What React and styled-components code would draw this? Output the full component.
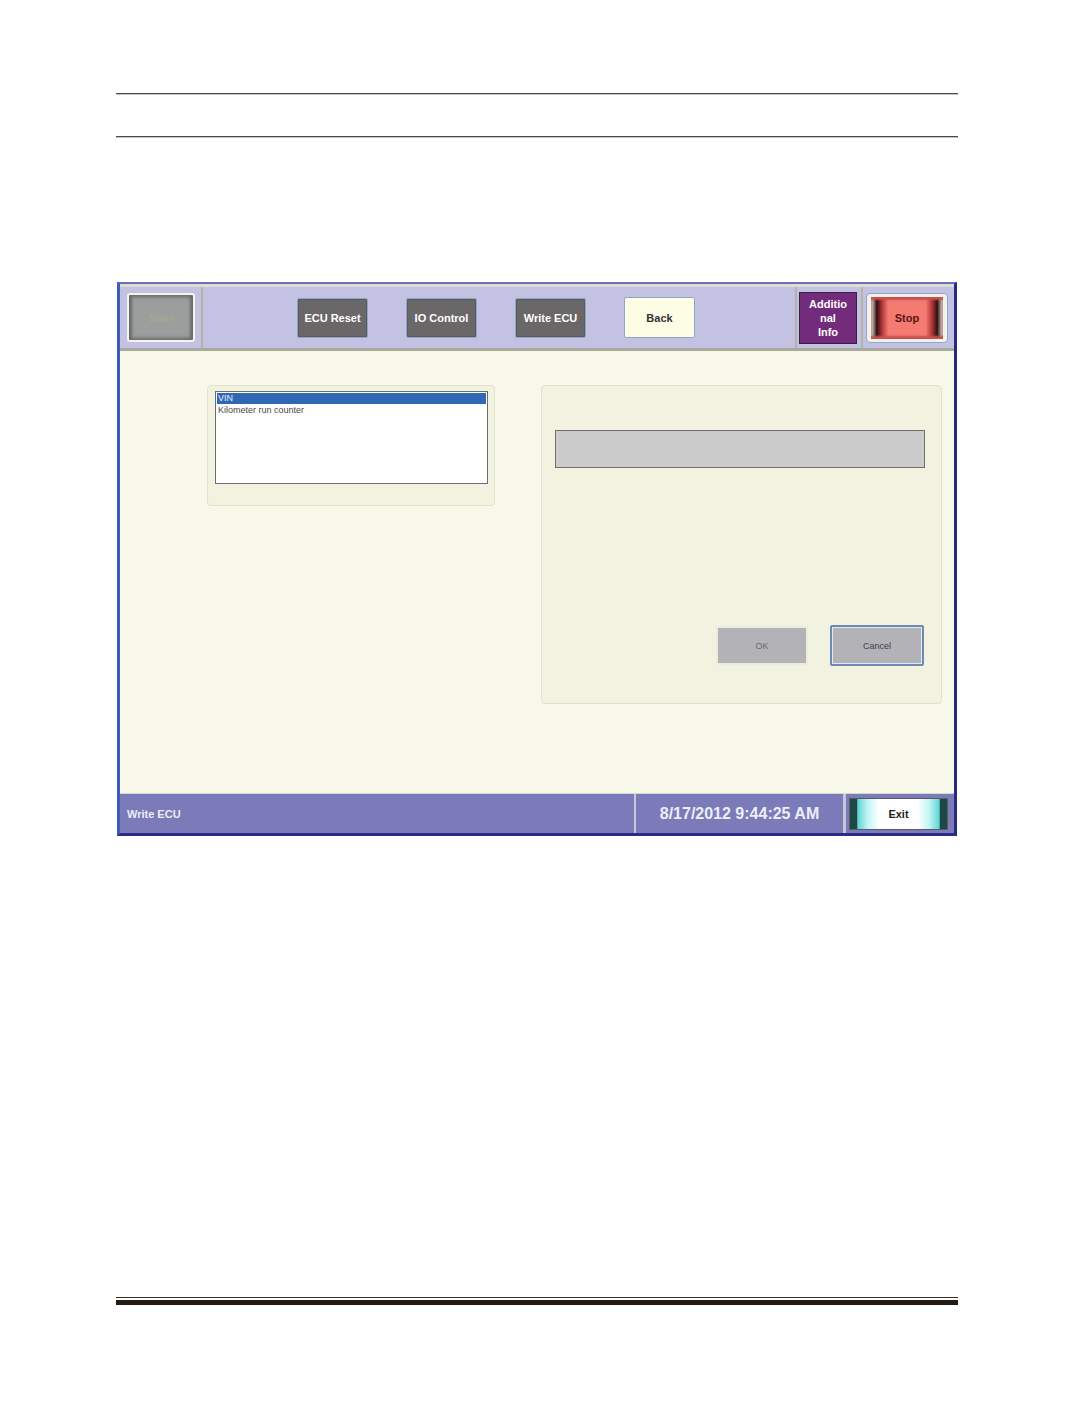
import styled, { createGlobalStyle } from "styled-components";

const GlobalStyle = createGlobalStyle`
  html, body {
    margin: 0;
    padding: 0;
    background: #ffffff;
  }
  body {
    font-family: "Liberation Sans", Arial, sans-serif;
  }
`;

const Page = styled.div`
  width: 842px;
  padding: 93px 0 0 116px;
  height: 1331px;
`;

const Rule = styled.div`
  height: 1px;
  background: #4a4a46;
  box-shadow: 0 1px 0 #c4c4c0;
  margin-top: ${(p) => p.$top || 0}px;
`;

const FooterRule = styled.div`
  margin-top: 461px;
  border-top: 1px solid #3a3228;
  padding-top: 2px;
  &::after {
    content: "";
    display: block;
    height: 5px;
    background: #241c14;
  }
`;

const Frame = styled.div`
  margin: 145px 0 0 1px;
  width: 834px;
  border-top: 2px solid #6c6cc0;
  border-left: 3px solid #3c5cbc;
  border-right: 3px solid #28287c;
  border-bottom: 3px solid #2c2c88;
  background: #f7f7ea;
`;

const Toolbar = styled.div`
  display: flex;
  height: 61px;
  background: #c4c2e2;
  border-top: 3px solid #dcdcd0;
  border-bottom: 3px solid #a9a99c;
`;

const ToolCell = styled.div`
  display: flex;
  align-items: center;
  width: ${(p) => p.$w}px;
  padding-left: ${(p) => p.$pad || 0}px;
  gap: ${(p) => p.$gap || 0}px;
  box-sizing: border-box;
  border-right: ${(p) => (p.$sep ? "2px solid #b4b4a6" : "none")};
`;

const StartButton = styled.div`
  width: 68px;
  height: 49px;
  box-sizing: border-box;
  border: 2px solid #f4f4ec;
  border-radius: 3px;
  background: #9c9e9e;
  box-shadow: inset 3px 0 3px #6a6c6c, inset -3px 0 3px #6a6c6c,
    inset 0 3px 3px #7e8080, inset 0 -3px 3px #7e8080;
  display: grid;
  place-items: center;
  font-size: 11px;
  font-weight: bold;
  color: #a4a690;
`;

const DarkButton = styled.div`
  width: 71px;
  height: 40px;
  box-sizing: border-box;
  border: 1px solid #8ea6c8;
  border-radius: 2px;
  background: #6a6768;
  box-shadow: inset 0 0 0 1px #58595c;
  display: grid;
  place-items: center;
  font-size: 11px;
  font-weight: bold;
  color: #ffffff;
`;

const BackButton = styled(DarkButton)`
  background: #fdfde6;
  box-shadow: none;
  color: #333333;
  height: 41px;
`;

const InfoButton = styled.div`
  margin-left: 2px;
  width: 58px;
  height: 52px;
  box-sizing: border-box;
  border: 1px solid #3a2040;
  background: #732b7c;
  display: flex;
  align-items: center;
  justify-content: center;
  text-align: center;
  font-size: 11px;
  font-weight: bold;
  line-height: 14px;
  color: #ffffff;
`;

const StopButton = styled.div`
  margin-left: 3px;
  width: 82px;
  height: 50px;
  box-sizing: border-box;
  border: 1px solid #90a8c8;
  border-radius: 4px;
  background: #f2f2e8;
  padding: 3px 4px;
`;

const StopFace = styled.div`
  height: 100%;
  background: linear-gradient(
    to right,
    #e8e8e0 0%,
    #301010 8%,
    #b83a3a 16%,
    #f47a72 24%,
    #f47a72 76%,
    #b83a3a 84%,
    #301010 92%,
    #e8e8e0 100%
  );
  box-shadow: inset 0 3px 2px #c85050, inset 0 -3px 2px #c85050;
  display: grid;
  place-items: center;
  font-size: 11px;
  font-weight: bold;
  color: #5a1414;
`;

const Content = styled.div`
  height: 442px;
  display: flex;
  align-items: flex-start;
  padding: 34px 0 0 87px;
  box-sizing: border-box;
  gap: 46px;
`;

const GroupBox = styled.div`
  width: ${(p) => p.$w}px;
  height: ${(p) => p.$h}px;
  box-sizing: border-box;
  background: #f2f2e0;
  border: 1px solid #e2e2cc;
  border-radius: 4px;
  padding: ${(p) => p.$pad};
  display: flex;
  flex-direction: column;
`;

const ListBox = styled.div`
  width: 273px;
  height: 93px;
  box-sizing: border-box;
  background: #ffffff;
  border: 1px solid #6c6c68;
  padding: 1px;
`;

const ListItem = styled.div`
  height: 11px;
  line-height: 11px;
  padding-left: 1px;
  font-size: 9px;
  color: ${(p) => (p.$selected ? "#e8eef8" : "#4a4a4a")};
  background: ${(p) => (p.$selected ? "#3068b6" : "transparent")};
  margin-bottom: ${(p) => (p.$selected ? 1 : 0)}px;
`;

const ValueField = styled.div`
  width: 370px;
  height: 38px;
  box-sizing: border-box;
  background: #cbcbcb;
  border: 1px solid #70706a;
`;

const DialogButtons = styled.div`
  margin-top: 157px;
  display: flex;
  align-items: center;
  justify-content: flex-end;
  gap: 22px;
  padding-right: 17px;
`;

const DialogButton = styled.div`
  width: ${(p) => (p.$primary ? 94 : 92)}px;
  height: ${(p) => (p.$primary ? 41 : 39)}px;
  box-sizing: border-box;
  background: #b3b3b7;
  border: ${(p) => (p.$primary ? "2px solid #6e88b4" : "2px solid #ececdc")};
  box-shadow: ${(p) => (p.$primary ? "inset 0 0 0 1px #e4e8f0" : "none")};
  border-radius: 2px;
  display: grid;
  place-items: center;
  font-size: 9px;
  color: ${(p) => (p.$primary ? "#3c3c4c" : "#6a6a6a")};
`;

const StatusBar = styled.div`
  display: flex;
  height: 40px;
  background: #7b7bba;
  border-top: 1px solid #d8d8cc;
  box-sizing: border-box;
`;

const StatusCell = styled.div`
  display: flex;
  align-items: center;
  justify-content: ${(p) => p.$justify || "flex-start"};
  width: ${(p) => p.$w}px;
  padding-left: ${(p) => p.$pad || 0}px;
  box-sizing: border-box;
  border-right: ${(p) => (p.$sep ? `${p.$sep}px solid #c8c8d8` : "none")};
  font-weight: bold;
  font-size: ${(p) => p.$size || 11}px;
  color: #eceef8;
`;

const ExitButton = styled.div`
  width: 99px;
  height: 32px;
  box-sizing: border-box;
  border: 1px solid #5a5a60;
  background: linear-gradient(
    to right,
    #1e4848 0%,
    #1e4848 7%,
    #60d4d4 8%,
    #bff4f4 18%,
    #ffffff 30%,
    #ffffff 70%,
    #bff4f4 82%,
    #60d4d4 92%,
    #1e4848 93%,
    #1e4848 100%
  );
  display: grid;
  place-items: center;
  font-size: 11px;
  font-weight: bold;
  color: #202020;
`;

const toolButtons = ["ECU Reset", "IO Control", "Write ECU"];

export default function App() {
  return (
    <>
      <GlobalStyle />
      <Page>
        <Rule />
        <Rule $top={42} />
        <Frame>
          <Toolbar>
            <ToolCell $w={83} $pad={7} $sep>
              <StartButton>Start</StartButton>
            </ToolCell>
            <ToolCell $w={594} $pad={94} $gap={38} $sep>
              {toolButtons.map((label) => (
                <DarkButton key={label}>{label}</DarkButton>
              ))}
              <BackButton>Back</BackButton>
            </ToolCell>
            <ToolCell $w={66} $sep>
              <InfoButton>
                Additio
                <br />
                nal
                <br />
                Info
              </InfoButton>
            </ToolCell>
            <ToolCell $w={91}>
              <StopButton>
                <StopFace>Stop</StopFace>
              </StopButton>
            </ToolCell>
          </Toolbar>
          <Content>
            <GroupBox $w={288} $h={121} $pad="5px 0 0 7px">
              <ListBox>
                <ListItem $selected>VIN</ListItem>
                <ListItem>Kilometer run counter</ListItem>
              </ListBox>
            </GroupBox>
            <GroupBox $w={401} $h={319} $pad="44px 0 0 13px">
              <ValueField />
              <DialogButtons>
                <DialogButton>OK</DialogButton>
                <DialogButton $primary>Cancel</DialogButton>
              </DialogButtons>
            </GroupBox>
          </Content>
          <StatusBar>
            <StatusCell $w={516} $pad={7} $sep={2}>
              Write ECU
            </StatusCell>
            <StatusCell $w={210} $justify="center" $size={16} $sep={3}>
              8/17/2012 9:44:25 AM
            </StatusCell>
            <StatusCell $w={108} $pad={3}>
              <ExitButton>Exit</ExitButton>
            </StatusCell>
          </StatusBar>
        </Frame>
        <FooterRule />
      </Page>
    </>
  );
}
